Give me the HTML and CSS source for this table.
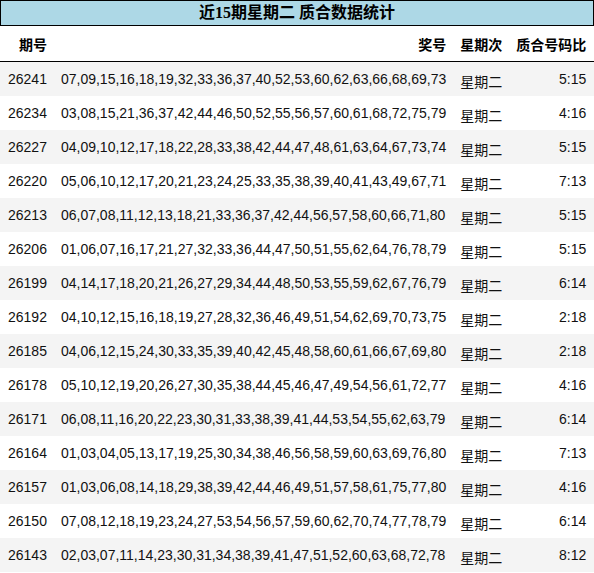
FILE: index.html
```html
<!DOCTYPE html>
<html>
<head>
<meta charset="utf-8">
<link rel="stylesheet" href="styles.css">
</head>
<body>
<div class="title">近15期星期二 质合数据统计</div>
<table class="stats">
<thead>
<tr><th>期号</th><th>奖号</th><th>星期次</th><th>质合号码比</th></tr>
</thead>
<tbody>
<tr><td>26241</td><td>07,09,15,16,18,19,32,33,36,37,40,52,53,60,62,63,66,68,69,73</td><td class="wk">星期二</td><td class="ratio">5:15</td></tr>
<tr><td>26234</td><td>03,08,15,21,36,37,42,44,46,50,52,55,56,57,60,61,68,72,75,79</td><td class="wk">星期二</td><td class="ratio">4:16</td></tr>
<tr><td>26227</td><td>04,09,10,12,17,18,22,28,33,38,42,44,47,48,61,63,64,67,73,74</td><td class="wk">星期二</td><td class="ratio">5:15</td></tr>
<tr><td>26220</td><td>05,06,10,12,17,20,21,23,24,25,33,35,38,39,40,41,43,49,67,71</td><td class="wk">星期二</td><td class="ratio">7:13</td></tr>
<tr><td>26213</td><td>06,07,08,11,12,13,18,21,33,36,37,42,44,56,57,58,60,66,71,80</td><td class="wk">星期二</td><td class="ratio">5:15</td></tr>
<tr><td>26206</td><td>01,06,07,16,17,21,27,32,33,36,44,47,50,51,55,62,64,76,78,79</td><td class="wk">星期二</td><td class="ratio">5:15</td></tr>
<tr><td>26199</td><td>04,14,17,18,20,21,26,27,29,34,44,48,50,53,55,59,62,67,76,79</td><td class="wk">星期二</td><td class="ratio">6:14</td></tr>
<tr><td>26192</td><td>04,10,12,15,16,18,19,27,28,32,36,46,49,51,54,62,69,70,73,75</td><td class="wk">星期二</td><td class="ratio">2:18</td></tr>
<tr><td>26185</td><td>04,06,12,15,24,30,33,35,39,40,42,45,48,58,60,61,66,67,69,80</td><td class="wk">星期二</td><td class="ratio">2:18</td></tr>
<tr><td>26178</td><td>05,10,12,19,20,26,27,30,35,38,44,45,46,47,49,54,56,61,72,77</td><td class="wk">星期二</td><td class="ratio">4:16</td></tr>
<tr><td>26171</td><td>06,08,11,16,20,22,23,30,31,33,38,39,41,44,53,54,55,62,63,79</td><td class="wk">星期二</td><td class="ratio">6:14</td></tr>
<tr><td>26164</td><td>01,03,04,05,13,17,19,25,30,34,38,46,56,58,59,60,63,69,76,80</td><td class="wk">星期二</td><td class="ratio">7:13</td></tr>
<tr><td>26157</td><td>01,03,06,08,14,18,29,38,39,42,44,46,49,51,57,58,61,75,77,80</td><td class="wk">星期二</td><td class="ratio">4:16</td></tr>
<tr><td>26150</td><td>07,08,12,18,19,23,24,27,53,54,56,57,59,60,62,70,74,77,78,79</td><td class="wk">星期二</td><td class="ratio">6:14</td></tr>
<tr><td>26143</td><td>02,03,07,11,14,23,30,31,34,38,39,41,47,51,52,60,63,68,72,78</td><td class="wk">星期二</td><td class="ratio">8:12</td></tr>
</tbody>
</table>
</body>
</html>
```
FILE: styles.css
```css
html, body {
  margin: 0;
  padding: 0;
  background: #ffffff;
}
body {
  width: 594px;
}
.title {
  box-sizing: border-box;
  height: 26px;
  border: 1px solid #000000;
  background: #add8e6;
  font-family: "Liberation Serif", "Noto Sans CJK SC", serif;
  font-weight: bold;
  font-size: 16px;
  line-height: 23px;
  text-align: center;
  color: #000000;
}
.stats {
  width: 594px;
  border-collapse: collapse;
  font-family: "Liberation Sans", "Noto Sans CJK SC", sans-serif;
  font-size: 14px;
  color: #111111;
}
.stats th,
.stats td {
  padding: 0 7px;
  white-space: nowrap;
}
.stats th {
  text-align: right;
}
.stats td {
  text-align: left;
}
.stats th:first-child,
.stats td:first-child {
  padding-left: 8px;
}
.stats th:last-child,
.stats td:last-child {
  padding-right: 8px;
}
.stats th {
  height: 35px;
  font-weight: bold;
  color: #000000;
  border-bottom: 1px solid #000000;
}
.stats td {
  height: 34px;
}
.stats td.wk {
  padding-top: 3px;
  height: 31px;
}
.stats td.ratio {
  text-align: right;
}
.stats tbody tr:nth-child(odd) {
  background: #f4f4f4;
}
```
